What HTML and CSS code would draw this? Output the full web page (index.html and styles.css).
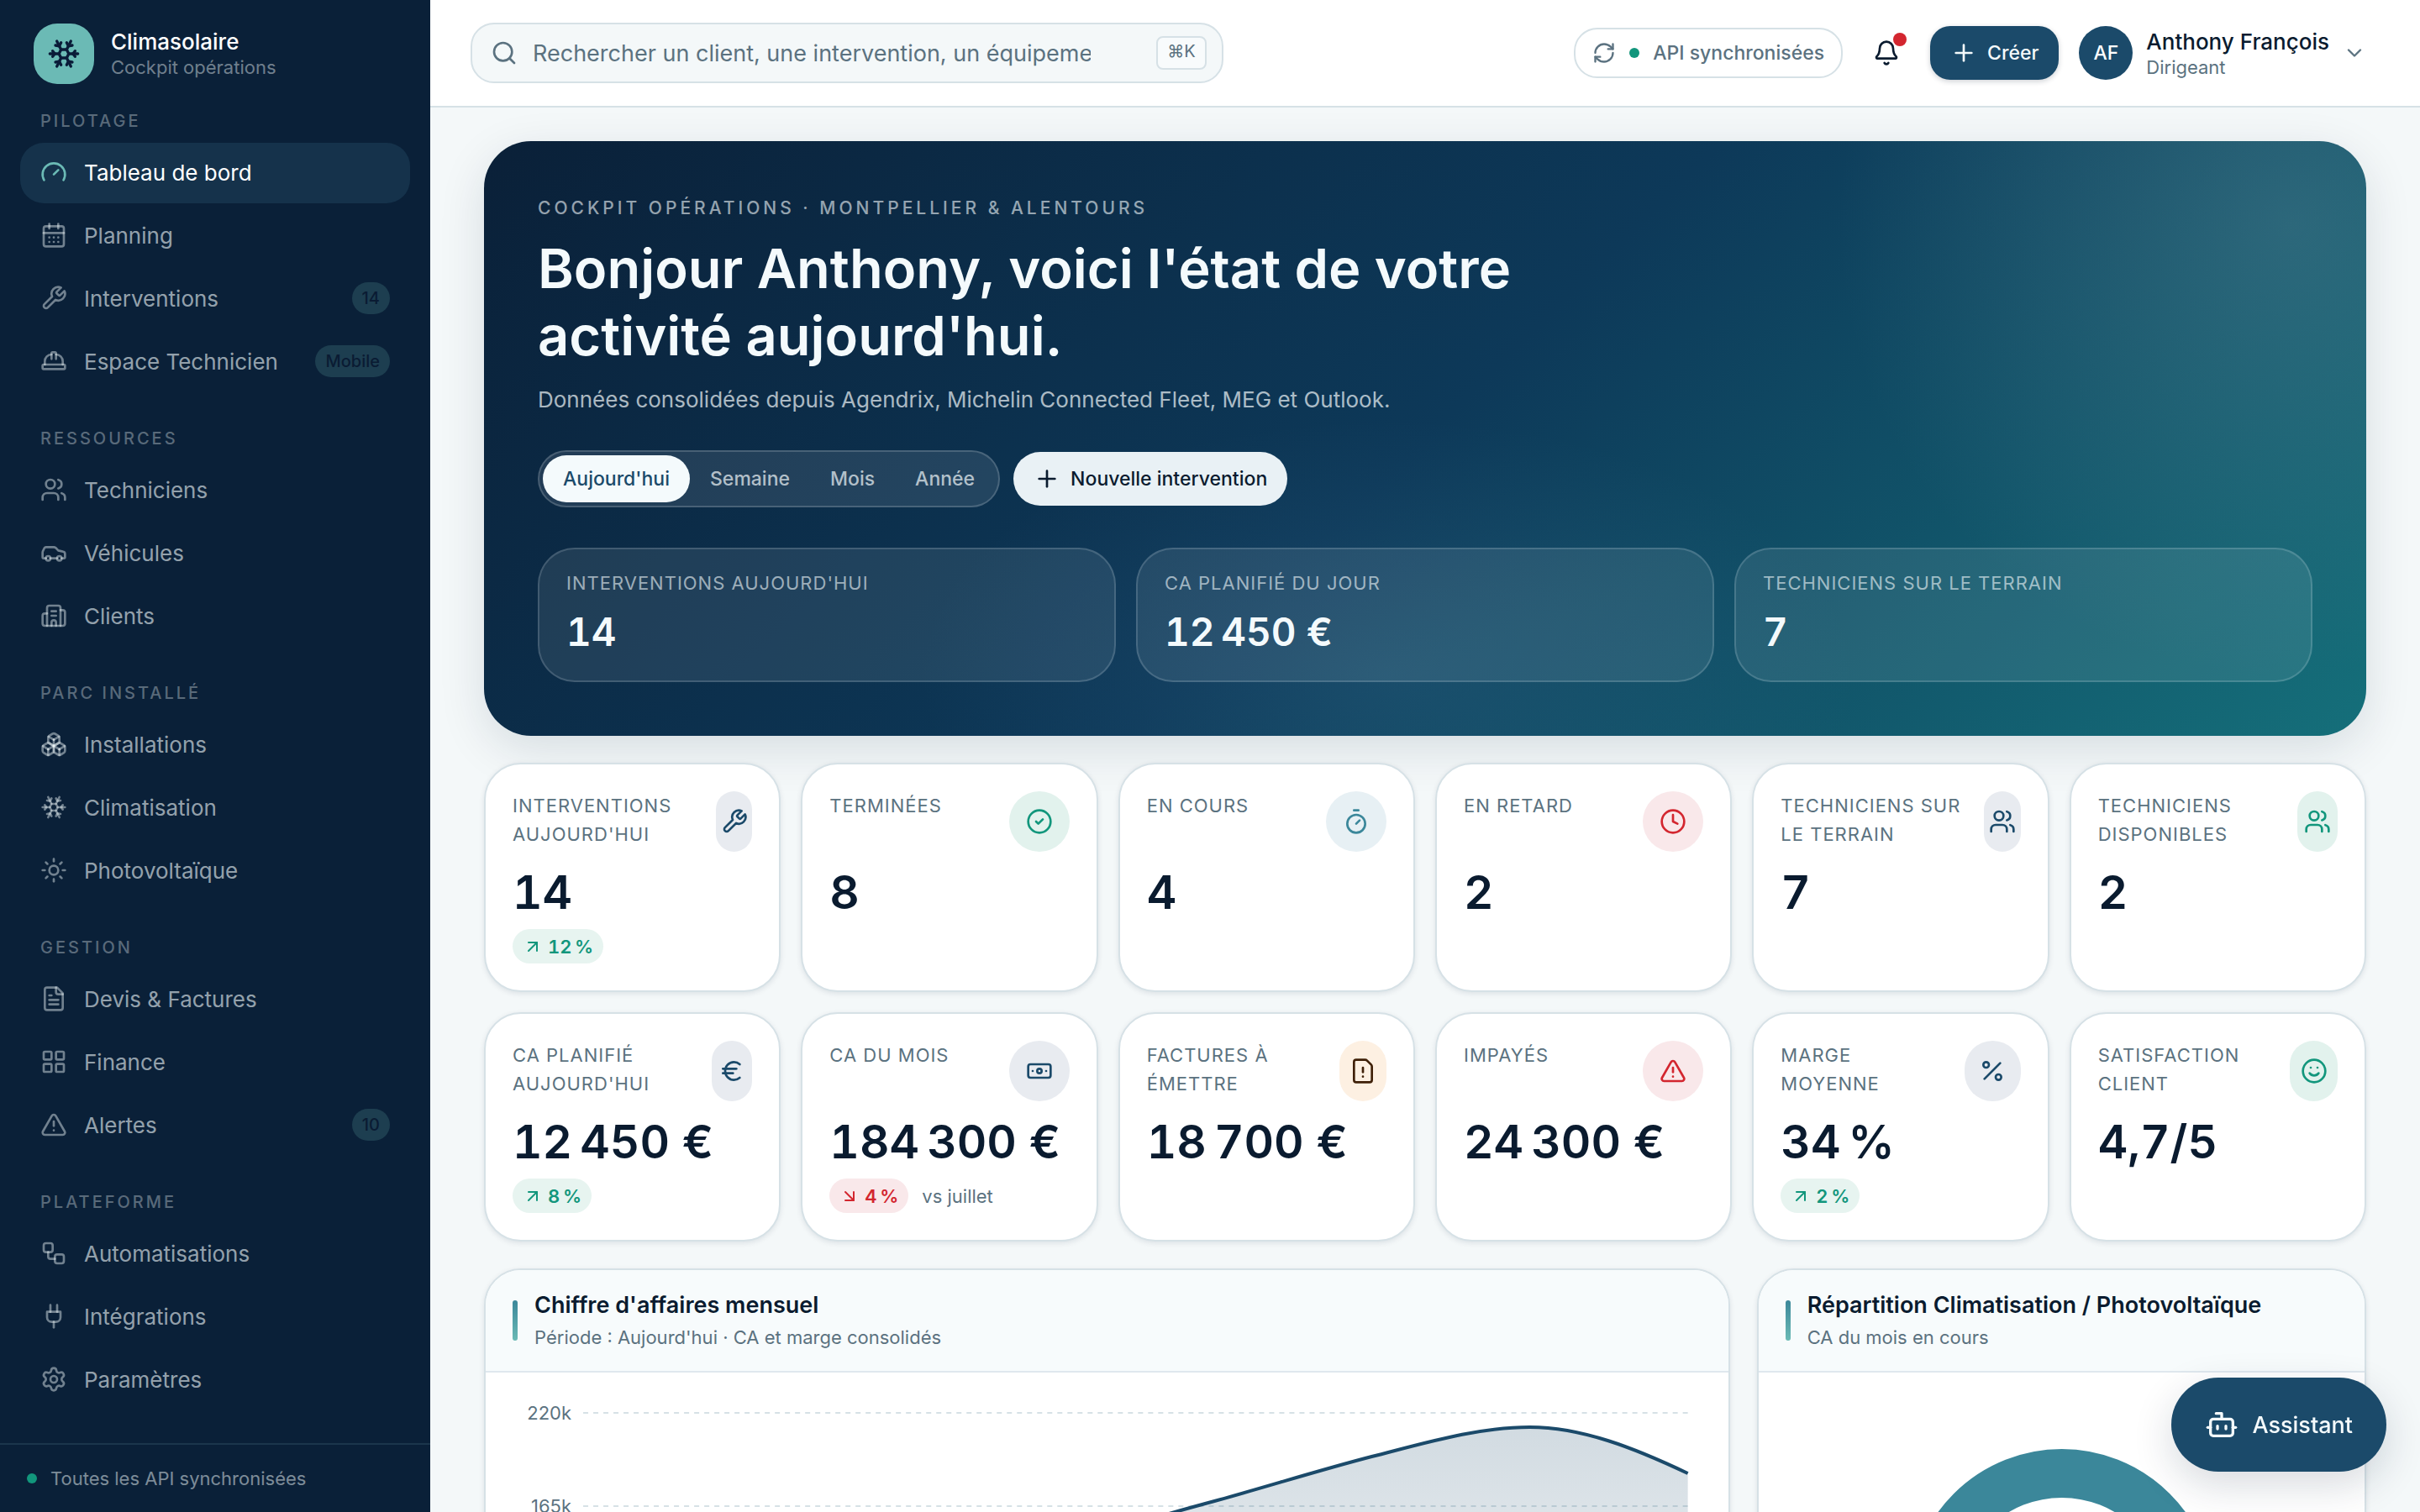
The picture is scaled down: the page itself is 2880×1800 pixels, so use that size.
FILE: index.html
```html
<!DOCTYPE html>
<html lang="fr">
<head>
    <meta charset="UTF-8">
    <meta name="viewport" content="width=device-width, initial-scale=1.0">
    <title>Climasolaire - Cockpit opérations</title>
    <link rel="stylesheet" href="styles.css">
</head>
<body>
    <!-- Icon sprite -->
    <svg class="sprite" aria-hidden="true">
        <symbol id="i-gauge" viewBox="0 0 24 24"><path d="m12 14 4-4"/><path d="M3.34 19a10 10 0 1 1 17.32 0"/></symbol>
        <symbol id="i-calendar" viewBox="0 0 24 24"><path d="M8 2v4"/><path d="M16 2v4"/><rect width="18" height="18" x="3" y="4" rx="2"/><path d="M3 10h18"/><path d="M8 14h.01"/><path d="M12 14h.01"/><path d="M16 14h.01"/><path d="M8 18h.01"/><path d="M12 18h.01"/><path d="M16 18h.01"/></symbol>
        <symbol id="i-wrench" viewBox="0 0 24 24"><path d="M14.7 6.3a1 1 0 0 0 0 1.4l1.6 1.6a1 1 0 0 0 1.4 0l3.77-3.77a6 6 0 0 1-7.94 7.94l-6.91 6.91a2.12 2.12 0 0 1-3-3l6.91-6.91a6 6 0 0 1 7.94-7.94l-3.76 3.76z"/></symbol>
        <symbol id="i-hardhat" viewBox="0 0 24 24"><path d="M10 10V5a1 1 0 0 1 1-1h2a1 1 0 0 1 1 1v5"/><path d="M14 6a6 6 0 0 1 6 6v3"/><path d="M4 15v-3a6 6 0 0 1 6-6"/><rect x="2" y="15" width="20" height="4" rx="1"/></symbol>
        <symbol id="i-users" viewBox="0 0 24 24"><path d="M16 21v-2a4 4 0 0 0-4-4H6a4 4 0 0 0-4 4v2"/><path d="M16 3.128a4 4 0 0 1 0 7.744"/><path d="M22 21v-2a4 4 0 0 0-3-3.87"/><circle cx="9" cy="7" r="4"/></symbol>
        <symbol id="i-car" viewBox="0 0 24 24"><path d="M19 17h2c.6 0 1-.4 1-1v-3c0-.9-.7-1.7-1.5-1.9C18.7 10.6 16 10 16 10s-1.3-1.4-2.2-2.3c-.5-.4-1.1-.7-1.8-.7H5c-.6 0-1.1.4-1.4.9l-1.4 2.9A3.7 3.7 0 0 0 2 12v4c0 .6.4 1 1 1h2"/><circle cx="7" cy="17" r="2"/><path d="M9 17h6"/><circle cx="17" cy="17" r="2"/></symbol>
        <symbol id="i-building" viewBox="0 0 24 24"><path d="M10 12h4"/><path d="M10 8h4"/><path d="M14 21v-3a2 2 0 0 0-4 0v3"/><path d="M6 10H4a2 2 0 0 0-2 2v7a2 2 0 0 0 2 2h16a2 2 0 0 0 2-2V9a2 2 0 0 0-2-2h-2"/><path d="M6 21V5a2 2 0 0 1 2-2h8a2 2 0 0 1 2 2v16"/></symbol>
        <symbol id="i-boxes" viewBox="0 0 24 24"><path d="M2.97 12.92A2 2 0 0 0 2 14.63v3.24a2 2 0 0 0 .97 1.71l3 1.8a2 2 0 0 0 2.06 0L12 19v-5.5l-5-3-4.03 2.42Z"/><path d="m7 16.5-4.74-2.85"/><path d="m7 16.5 5-3"/><path d="M7 16.5v5.17"/><path d="M12 13.5V19l3.97 2.38a2 2 0 0 0 2.06 0l3-1.8a2 2 0 0 0 .97-1.71v-3.24a2 2 0 0 0-.97-1.71L17 10.5l-5 3Z"/><path d="m17 16.5-5-3"/><path d="m17 16.5 4.74-2.85"/><path d="M17 16.5v5.17"/><path d="M7.97 4.42A2 2 0 0 0 7 6.13v4.37l5 3 5-3V6.13a2 2 0 0 0-.97-1.71l-3-1.8a2 2 0 0 0-2.06 0l-3 1.8Z"/><path d="M12 8 7.26 5.15"/><path d="m12 8 4.74-2.85"/><path d="M12 13.5V8"/></symbol>
        <symbol id="i-snow" viewBox="0 0 24 24"><path d="m10 20-1.25-2.5L6 18"/><path d="M10 4 8.75 6.5 6 6"/><path d="m14 20 1.25-2.5L18 18"/><path d="m14 4 1.25 2.5L18 6"/><path d="m17 21-3-6h-4"/><path d="m17 3-3 6 1.5 3"/><path d="M2 12h6.5L10 9"/><path d="m20 10-1.5 2 1.5 2"/><path d="M22 12h-6.5L14 15"/><path d="m4 10 1.5 2L4 14"/><path d="m7 21 3-6-1.5-3"/><path d="m7 3 3 6h4"/></symbol>
        <symbol id="i-sun" viewBox="0 0 24 24"><circle cx="12" cy="12" r="4"/><path d="M12 2v2"/><path d="M12 20v2"/><path d="m4.93 4.93 1.41 1.41"/><path d="m17.66 17.66 1.41 1.41"/><path d="M2 12h2"/><path d="M20 12h2"/><path d="m6.34 17.66-1.41 1.41"/><path d="m19.07 4.93-1.41 1.41"/></symbol>
        <symbol id="i-file" viewBox="0 0 24 24"><path d="M15 2H6a2 2 0 0 0-2 2v16a2 2 0 0 0 2 2h12a2 2 0 0 0 2-2V7Z"/><path d="M14 2v4a2 2 0 0 0 2 2h4"/><path d="M10 9H8"/><path d="M16 13H8"/><path d="M16 17H8"/></symbol>
        <symbol id="i-grid" viewBox="0 0 24 24"><rect width="7" height="7" x="3" y="3" rx="1"/><rect width="7" height="7" x="14" y="3" rx="1"/><rect width="7" height="7" x="14" y="14" rx="1"/><rect width="7" height="7" x="3" y="14" rx="1"/></symbol>
        <symbol id="i-alert" viewBox="0 0 24 24"><path d="m21.73 18-8-14a2 2 0 0 0-3.48 0l-8 14A2 2 0 0 0 4 21h16a2 2 0 0 0 1.73-3"/><path d="M12 9v4"/><path d="M12 17h.01"/></symbol>
        <symbol id="i-workflow" viewBox="0 0 24 24"><rect width="8" height="8" x="3" y="3" rx="2"/><path d="M7 11v4a2 2 0 0 0 2 2h4"/><rect width="8" height="8" x="13" y="13" rx="2"/></symbol>
        <symbol id="i-plug" viewBox="0 0 24 24"><path d="M12 22v-5"/><path d="M9 8V2"/><path d="M15 8V2"/><path d="M18 8v5a4 4 0 0 1-4 4h-4a4 4 0 0 1-4-4V8Z"/></symbol>
        <symbol id="i-settings" viewBox="0 0 24 24"><path d="M9.671 4.136a2.34 2.34 0 0 1 4.659 0 2.34 2.34 0 0 0 3.319 1.915 2.34 2.34 0 0 1 2.33 4.033 2.34 2.34 0 0 0 0 3.831 2.34 2.34 0 0 1-2.33 4.033 2.34 2.34 0 0 0-3.319 1.915 2.34 2.34 0 0 1-4.659 0 2.34 2.34 0 0 0-3.32-1.915 2.34 2.34 0 0 1-2.33-4.033 2.34 2.34 0 0 0 0-3.831A2.34 2.34 0 0 1 6.35 6.051a2.34 2.34 0 0 0 3.319-1.915"/><circle cx="12" cy="12" r="3"/></symbol>
        <symbol id="i-search" viewBox="0 0 24 24"><path d="m21 21-4.34-4.34"/><circle cx="11" cy="11" r="8"/></symbol>
        <symbol id="i-refresh" viewBox="0 0 24 24"><path d="M3 12a9 9 0 0 1 9-9 9.75 9.75 0 0 1 6.74 2.74L21 8"/><path d="M21 3v5h-5"/><path d="M21 12a9 9 0 0 1-9 9 9.75 9.75 0 0 1-6.74-2.74L3 16"/><path d="M8 16H3v5"/></symbol>
        <symbol id="i-bell" viewBox="0 0 24 24"><path d="M10.268 21a2 2 0 0 0 3.464 0"/><path d="M3.262 15.326A1 1 0 0 0 4 17h16a1 1 0 0 0 .74-1.673C19.41 13.956 18 12.499 18 8A6 6 0 0 0 6 8c0 4.499-1.411 5.956-2.738 7.326"/></symbol>
        <symbol id="i-plus" viewBox="0 0 24 24"><path d="M5 12h14"/><path d="M12 5v14"/></symbol>
        <symbol id="i-chevron" viewBox="0 0 24 24"><path d="m6 9 6 6 6-6"/></symbol>
        <symbol id="i-check" viewBox="0 0 24 24"><circle cx="12" cy="12" r="10"/><path d="m9 12 2 2 4-4"/></symbol>
        <symbol id="i-timer" viewBox="0 0 24 24"><path d="M10 2h4"/><path d="m12 14 3-3"/><circle cx="12" cy="14" r="8"/></symbol>
        <symbol id="i-clock" viewBox="0 0 24 24"><circle cx="12" cy="12" r="10"/><path d="M12 6v6l4 2"/></symbol>
        <symbol id="i-euro" viewBox="0 0 24 24"><path d="M4 10h12"/><path d="M4 14h9"/><path d="M19 6a7.7 7.7 0 0 0-5.2-2A7.9 7.9 0 0 0 6 12c0 4.4 3.5 8 7.8 8 2 0 3.8-.8 5.2-2"/></symbol>
        <symbol id="i-banknote" viewBox="0 0 24 24"><rect width="20" height="12" x="2" y="6" rx="2"/><circle cx="12" cy="12" r="2"/><path d="M6 12h.01M18 12h.01"/></symbol>
        <symbol id="i-filewarn" viewBox="0 0 24 24"><path d="M6 22a2 2 0 0 1-2-2V4a2 2 0 0 1 2-2h8a2.4 2.4 0 0 1 1.7.7l3.6 3.6A2.4 2.4 0 0 1 20 8v12a2 2 0 0 1-2 2z"/><path d="M12 9v4"/><path d="M12 17h.01"/></symbol>
        <symbol id="i-percent" viewBox="0 0 24 24"><path d="M19 5 5 19"/><circle cx="6.5" cy="6.5" r="2.5"/><circle cx="17.5" cy="17.5" r="2.5"/></symbol>
        <symbol id="i-smile" viewBox="0 0 24 24"><circle cx="12" cy="12" r="10"/><path d="M8 14s1.500 2 4 2 4-2 4-2"/><path d="M9 9h.01"/><path d="M15 9h.01"/></symbol>
        <symbol id="i-up" viewBox="0 0 24 24"><path d="M7 7h10v10"/><path d="M7 17 17 7"/></symbol>
        <symbol id="i-down" viewBox="0 0 24 24"><path d="m7 7 10 10"/><path d="M17 7v10H7"/></symbol>
        <symbol id="i-bot" viewBox="0 0 24 24"><path d="M12 8V4H8"/><rect width="16" height="12" x="4" y="8" rx="2"/><path d="M2 14h2"/><path d="M20 14h2"/><path d="M15 13v2"/><path d="M9 13v2"/></symbol>
    </svg>

    <div class="app">
        <aside class="sidebar">
            <div class="brand">
                <span class="brand-logo"><svg class="icon icon-lg"><use href="#i-snow"/></svg></span>
                <div>
                    <div class="brand-name">Climasolaire</div>
                    <div class="brand-sub">Cockpit opérations</div>
                </div>
            </div>

            <nav class="nav">
                <section class="nav-section">
                    <h2>Pilotage</h2>
                    <a href="#" class="active"><svg class="icon"><use href="#i-gauge"/></svg>Tableau de bord</a>
                    <a href="#"><svg class="icon"><use href="#i-calendar"/></svg>Planning</a>
                    <a href="#"><svg class="icon"><use href="#i-wrench"/></svg>Interventions<span class="nav-badge">14</span></a>
                    <a href="#"><svg class="icon"><use href="#i-hardhat"/></svg>Espace Technicien<span class="nav-badge">Mobile</span></a>
                </section>
                <section class="nav-section">
                    <h2>Ressources</h2>
                    <a href="#"><svg class="icon"><use href="#i-users"/></svg>Techniciens</a>
                    <a href="#"><svg class="icon"><use href="#i-car"/></svg>Véhicules</a>
                    <a href="#"><svg class="icon"><use href="#i-building"/></svg>Clients</a>
                </section>
                <section class="nav-section">
                    <h2>Parc installé</h2>
                    <a href="#"><svg class="icon"><use href="#i-boxes"/></svg>Installations</a>
                    <a href="#"><svg class="icon"><use href="#i-snow"/></svg>Climatisation</a>
                    <a href="#"><svg class="icon"><use href="#i-sun"/></svg>Photovoltaïque</a>
                </section>
                <section class="nav-section">
                    <h2>Gestion</h2>
                    <a href="#"><svg class="icon"><use href="#i-file"/></svg>Devis &amp; Factures</a>
                    <a href="#"><svg class="icon"><use href="#i-grid"/></svg>Finance</a>
                    <a href="#"><svg class="icon"><use href="#i-alert"/></svg>Alertes<span class="nav-badge">10</span></a>
                </section>
                <section class="nav-section">
                    <h2>Plateforme</h2>
                    <a href="#"><svg class="icon"><use href="#i-workflow"/></svg>Automatisations</a>
                    <a href="#"><svg class="icon"><use href="#i-plug"/></svg>Intégrations</a>
                    <a href="#"><svg class="icon"><use href="#i-settings"/></svg>Paramètres</a>
                </section>
            </nav>

            <div class="sidebar-footer"><span class="dot"></span>Toutes les API synchronisées</div>
        </aside>

        <div class="page">
            <header class="topbar">
                <label class="search">
                    <svg class="icon"><use href="#i-search"/></svg>
                    <input type="text" aria-label="Recherche" placeholder="Rechercher un client, une intervention, un équipement…">
                    <kbd>⌘K</kbd>
                </label>
                <div class="topbar-actions">
                    <button class="sync"><svg class="icon icon-sm"><use href="#i-refresh"/></svg><span class="dot"></span>API synchronisées</button>
                    <button class="bell" aria-label="Notifications"><svg class="icon"><use href="#i-bell"/></svg><span class="bell-dot"></span></button>
                    <button class="btn-create"><svg class="icon"><use href="#i-plus"/></svg>Créer</button>
                    <button class="user">
                        <span class="avatar">AF</span>
                        <span class="user-text">
                            <span class="user-name">Anthony François</span>
                            <span class="user-role">Dirigeant</span>
                        </span>
                        <svg class="icon icon-sm"><use href="#i-chevron"/></svg>
                    </button>
                </div>
            </header>

            <main class="content">
                <section class="hero">
                    <p class="hero-eyebrow">Cockpit opérations · Montpellier &amp; alentours</p>
                    <h1>Bonjour Anthony, voici l'état de votre activité aujourd'hui.</h1>
                    <p class="hero-sub">Données consolidées depuis Agendrix, Michelin Connected Fleet, MEG et Outlook.</p>
                    <div class="hero-actions">
                        <div class="period">
                            <button class="selected">Aujourd'hui</button>
                            <button>Semaine</button>
                            <button>Mois</button>
                            <button>Année</button>
                        </div>
                        <button class="btn-new"><svg class="icon"><use href="#i-plus"/></svg>Nouvelle intervention</button>
                    </div>
                    <div class="hero-stats">
                        <div class="hero-stat"><h3>Interventions aujourd'hui</h3><strong>14</strong></div>
                        <div class="hero-stat"><h3>CA planifié du jour</h3><strong>12&#8239;450&nbsp;€</strong></div>
                        <div class="hero-stat"><h3>Techniciens sur le terrain</h3><strong>7</strong></div>
                    </div>
                </section>

                <section class="kpis">
                    <article class="kpi">
                        <div class="kpi-head"><h3>Interventions aujourd'hui</h3><span class="chip navy"><svg class="icon"><use href="#i-wrench"/></svg></span></div>
                        <strong>14</strong>
                        <div class="trend"><span class="pill up"><svg class="icon"><use href="#i-up"/></svg>12&#8239;%</span></div>
                    </article>
                    <article class="kpi">
                        <div class="kpi-head"><h3>Terminées</h3><span class="chip green"><svg class="icon"><use href="#i-check"/></svg></span></div>
                        <strong>8</strong>
                    </article>
                    <article class="kpi">
                        <div class="kpi-head"><h3>En cours</h3><span class="chip teal"><svg class="icon"><use href="#i-timer"/></svg></span></div>
                        <strong>4</strong>
                    </article>
                    <article class="kpi">
                        <div class="kpi-head"><h3>En retard</h3><span class="chip red"><svg class="icon"><use href="#i-clock"/></svg></span></div>
                        <strong>2</strong>
                    </article>
                    <article class="kpi">
                        <div class="kpi-head"><h3>Techniciens sur le terrain</h3><span class="chip navy"><svg class="icon"><use href="#i-users"/></svg></span></div>
                        <strong>7</strong>
                    </article>
                    <article class="kpi">
                        <div class="kpi-head"><h3>Techniciens disponibles</h3><span class="chip green"><svg class="icon"><use href="#i-users"/></svg></span></div>
                        <strong>2</strong>
                    </article>
                    <article class="kpi">
                        <div class="kpi-head"><h3>CA planifié aujourd'hui</h3><span class="chip navy"><svg class="icon"><use href="#i-euro"/></svg></span></div>
                        <strong>12&#8239;450&nbsp;€</strong>
                        <div class="trend"><span class="pill up"><svg class="icon"><use href="#i-up"/></svg>8&#8239;%</span></div>
                    </article>
                    <article class="kpi">
                        <div class="kpi-head"><h3>CA du mois</h3><span class="chip navy"><svg class="icon"><use href="#i-banknote"/></svg></span></div>
                        <strong>184&#8239;300&nbsp;€</strong>
                        <div class="trend"><span class="pill down"><svg class="icon"><use href="#i-down"/></svg>4&#8239;%</span>vs juillet</div>
                    </article>
                    <article class="kpi">
                        <div class="kpi-head"><h3>Factures à émettre</h3><span class="chip orange"><svg class="icon"><use href="#i-filewarn"/></svg></span></div>
                        <strong>18&#8239;700&nbsp;€</strong>
                    </article>
                    <article class="kpi">
                        <div class="kpi-head"><h3>Impayés</h3><span class="chip red"><svg class="icon"><use href="#i-alert"/></svg></span></div>
                        <strong>24&#8239;300&nbsp;€</strong>
                    </article>
                    <article class="kpi">
                        <div class="kpi-head"><h3>Marge moyenne</h3><span class="chip navy"><svg class="icon"><use href="#i-percent"/></svg></span></div>
                        <strong>34&#8239;%</strong>
                        <div class="trend"><span class="pill up"><svg class="icon"><use href="#i-up"/></svg>2&#8239;%</span></div>
                    </article>
                    <article class="kpi">
                        <div class="kpi-head"><h3>Satisfaction client</h3><span class="chip green"><svg class="icon"><use href="#i-smile"/></svg></span></div>
                        <strong>4,7/5</strong>
                    </article>
                </section>

                <section class="panels">
                    <article class="panel panel-wide">
                        <header class="panel-head">
                            <div>
                                <h2>Chiffre d'affaires mensuel</h2>
                                <p>Période : Aujourd'hui · CA et marge consolidés</p>
                            </div>
                        </header>
                        <div class="panel-body">
                            <svg class="chart" viewBox="0 0 1414 520">
                                <defs>
                                    <linearGradient id="area" x1="0" y1="0" x2="0" y2="1">
                                        <stop offset="0" stop-color="#1b4a6a" stop-opacity="0.2"/>
                                        <stop offset="1" stop-color="#1b4a6a" stop-opacity="0"/>
                                    </linearGradient>
                                </defs>
                                <g class="chart-grid">
                                    <path d="M84 16H1398M84 127H1398M84 238H1398M84 349H1398M84 460H1398"/>
                                </g>
                                <g class="chart-axis">
                                    <text x="70" y="24">220k</text>
                                    <text x="70" y="135">165k</text>
                                </g>
                                <path fill="url(#area)" d="M84 250C147 240 209 236 272 228C334 220 397 210 459 196C522 182 584 192 647 174C710 156 772 138 835 121C897 104 960 84 1022 68C1085 52 1147 33 1210 33C1272 33 1335 58 1398 88V460H84Z"/>
                                <path class="chart-line" d="M84 250C147 240 209 236 272 228C334 220 397 210 459 196C522 182 584 192 647 174C710 156 772 138 835 121C897 104 960 84 1022 68C1085 52 1147 33 1210 33C1272 33 1335 58 1398 88"/>
                            </svg>
                        </div>
                    </article>
                    <article class="panel">
                        <header class="panel-head">
                            <div>
                                <h2>Répartition Climatisation / Photovoltaïque</h2>
                                <p>CA du mois en cours</p>
                            </div>
                        </header>
                        <div class="panel-body">
                            <svg class="chart" viewBox="0 0 658 520">
                                <circle cx="329" cy="241" r="153" fill="none" stroke="#3b879a" stroke-width="58"/>
                                <path d="M476 284A153 153 0 0 1 182 284" fill="none" stroke="#6dbcb6" stroke-width="58"/>
                            </svg>
                        </div>
                    </article>
                </section>
            </main>
        </div>

        <button class="assistant"><svg class="icon icon-lg"><use href="#i-bot"/></svg>Assistant</button>
    </div>
</body>
</html>
```
FILE: styles.css
```css
* {
    box-sizing: border-box;
}

body {
    margin: 0;
    font-family: Inter, "Noto Sans", sans-serif;
    font-size: 28px;
    color: #0a1b2f;
    background-color: #f4f8f9;
}

h1, h2, h3, p {
    margin: 0;
}

button {
    border: none;
    background: none;
    padding: 0;
    font: inherit;
    color: inherit;
    cursor: pointer;
}

.sprite {
    display: none;
}

.icon {
    width: 32px;
    height: 32px;
    flex-shrink: 0;
    fill: none;
    stroke: currentColor;
    stroke-width: 2;
    stroke-linecap: round;
    stroke-linejoin: round;
}

.icon-sm {
    width: 28px;
    height: 28px;
}

.icon-lg {
    width: 40px;
    height: 40px;
}

.dot {
    width: 12px;
    height: 12px;
    flex-shrink: 0;
    border-radius: 50%;
    background-color: #12967c;
}

.app {
    display: flex;
    height: 100vh;
    overflow: hidden;
}

/* Sidebar */
.sidebar {
    display: flex;
    flex-direction: column;
    width: 512px;
    flex-shrink: 0;
    background-color: #0a2038;
    color: #fff;
}

.brand {
    display: flex;
    align-items: center;
    gap: 20px;
    padding: 28px 40px;
}

.brand-logo {
    display: flex;
    align-items: center;
    justify-content: center;
    width: 72px;
    height: 72px;
    border-radius: 28px;
    background-color: #6bbab5;
    color: #0a1b38;
}

.brand-name {
    font-size: 26px;
    font-weight: 500;
    line-height: 32px;
}

.brand-sub {
    font-size: 22px;
    line-height: 28px;
    color: rgba(240, 248, 250, 0.45);
}

.nav {
    flex: 1;
    padding: 0 24px;
    overflow: hidden;
}

.nav-section {
    display: flex;
    flex-direction: column;
    gap: 3px;
    margin-bottom: 39px;
}

.nav-section h2 {
    margin-bottom: 7px;
    padding: 0 24px;
    font-size: 20px;
    font-weight: 500;
    line-height: 32px;
    letter-spacing: 3px;
    text-transform: uppercase;
    color: rgba(240, 248, 250, 0.35);
}

.nav-section a {
    display: flex;
    align-items: center;
    gap: 20px;
    height: 72px;
    padding: 0 24px 2px;
    border-radius: 28px;
    font-size: 26px;
    font-weight: 400;
    color: rgba(240, 248, 250, 0.62);
    text-decoration: none;
}

.nav-section .icon {
    color: rgba(240, 248, 250, 0.45);
}

.nav-section .active {
    background-color: #15324b;
    color: #fff;
}

.nav-section .active .icon {
    color: #6bbab5;
}

.nav-badge {
    margin-left: auto;
    padding: 0 12px;
    border-radius: 19px;
    background-color: #1d3e50;
    color: #0a1b33;
    font-size: 20px;
    font-weight: 500;
    line-height: 38px;
}

.sidebar-footer {
    display: flex;
    align-items: center;
    gap: 16px;
    height: 82px;
    padding: 0 32px;
    border-top: 2px solid #1b364c;
    font-size: 22px;
    color: rgba(240, 248, 250, 0.5);
}

/* Top bar */
.page {
    display: flex;
    flex: 1;
    flex-direction: column;
    min-width: 0;
}

.topbar {
    display: flex;
    align-items: center;
    justify-content: space-between;
    flex-shrink: 0;
    height: 128px;
    padding: 0 48px;
    background-color: #fff;
    border-bottom: 2px solid #d6e1e6;
}

.search {
    display: flex;
    align-items: center;
    gap: 18px;
    width: 896px;
    height: 72px;
    padding: 0 18px 0 22px;
    border: 2px solid #d6e1e6;
    border-radius: 28px;
    background-color: #f4f8f9;
    color: #5b7280;
}

.search input {
    flex: 1;
    min-width: 0;
    margin-right: 60px;
    padding: 0;
    border: none;
    outline: none;
    background: none;
    font: inherit;
    font-size: 27px;
    color: #0a1b2f;
}

.search input::placeholder {
    color: #5b7280;
}

.search kbd {
    width: 60px;
    height: 40px;
    border: 2px solid #d6e1e6;
    border-radius: 8px;
    background-color: #f8fbfc;
    font-family: inherit;
    font-size: 20px;
    line-height: 32px;
    text-align: center;
}

.topbar-actions {
    display: flex;
    align-items: center;
    gap: 20px;
    font-size: 23px;
    font-weight: 500;
}

.sync {
    display: flex;
    align-items: center;
    gap: 16px;
    height: 60px;
    padding: 0 20px;
    border: 2px solid #d6e1e6;
    border-radius: 28px;
    color: #5b7280;
}

.bell {
    position: relative;
    display: flex;
    align-items: center;
    justify-content: center;
    width: 64px;
    height: 64px;
}

.bell-dot {
    position: absolute;
    top: 8px;
    right: 8px;
    width: 16px;
    height: 16px;
    border-radius: 50%;
    background-color: #d3262f;
}

.btn-create {
    display: flex;
    align-items: center;
    gap: 12px;
    height: 64px;
    padding: 0 24px;
    border-radius: 24px;
    background-color: #1b4a6a;
    color: #f4fafc;
    box-shadow: 0 2px 6px rgba(10, 27, 47, 0.2);
}

.user {
    display: flex;
    align-items: center;
    gap: 16px;
    padding: 0 16px 0 4px;
}

.avatar {
    width: 64px;
    border-radius: 50%;
    background-color: #1b4a6a;
    color: #fff;
    line-height: 64px;
    text-align: center;
}

.user-text {
    display: flex;
    flex-direction: column;
    text-align: left;
}

.user-name {
    font-size: 26px;
    line-height: 34px;
}

.user-role {
    font-size: 22px;
    font-weight: 400;
    line-height: 26px;
    color: #5b7280;
}

.user .icon {
    color: #5b7280;
}

/* Content */
.content {
    display: flex;
    flex: 1;
    flex-direction: column;
    gap: 32px;
    min-height: 0;
    padding: 40px 64px;
    overflow: hidden;
}

.content > * {
    flex-shrink: 0;
}

.hero {
    padding: 64px;
    border-radius: 56px;
    background:
        radial-gradient(circle 540px at 96% 14%, rgba(115, 150, 165, 0.28), transparent),
        radial-gradient(ellipse at 48% 90%, rgba(90, 140, 180, 0.15), transparent 34%),
        linear-gradient(135deg, #0a2038 0%, #0d3959 50%, #156f7a 100%);
    color: #f4fafc;
    box-shadow: 0 16px 56px rgba(10, 32, 56, 0.12);
}

.hero-eyebrow {
    font-size: 21px;
    font-weight: 500;
    line-height: 32px;
    letter-spacing: 4px;
    text-transform: uppercase;
    color: rgba(244, 250, 252, 0.6);
}

.hero h1 {
    max-width: 1280px;
    margin: 16px 0;
    font-size: 65px;
    font-weight: 600;
    line-height: 80px;
}

.hero-sub {
    font-size: 26px;
    line-height: 40px;
    color: rgba(244, 250, 252, 0.7);
}

.hero-actions {
    display: flex;
    align-items: center;
    gap: 16px;
    margin: 40px 0 48px;
    font-size: 23px;
    font-weight: 500;
}

.period {
    display: flex;
    padding: 4px;
    border: 2px solid rgba(244, 250, 252, 0.18);
    border-radius: 34px;
    background-color: rgba(244, 250, 252, 0.1);
}

.period button {
    height: 56px;
    padding: 0 24px;
    border-radius: 28px;
    color: rgba(244, 250, 252, 0.7);
}

.period .selected {
    background-color: #f4fafc;
    color: #1b4a6a;
}

.btn-new {
    display: flex;
    align-items: center;
    gap: 12px;
    height: 64px;
    padding: 0 24px;
    border-radius: 32px;
    background-color: #e9f1f5;
    color: #0a1b2f;
}

.hero-stats {
    display: grid;
    grid-template-columns: repeat(3, 1fr);
    gap: 24px;
}

.hero-stat {
    height: 160px;
    padding: 24px 32px;
    border: 2px solid rgba(244, 250, 252, 0.16);
    border-radius: 44px;
    background-color: rgba(244, 250, 252, 0.09);
}

.hero-stat h3 {
    font-size: 22px;
    font-weight: 400;
    line-height: 32px;
    letter-spacing: 1px;
    text-transform: uppercase;
    color: rgba(244, 250, 252, 0.6);
}

.hero-stat strong {
    display: block;
    margin-top: 14px;
    font-size: 46px;
    font-weight: 600;
    line-height: 56px;
    font-variant-numeric: tabular-nums;
}

/* KPI cards */
.kpis {
    display: grid;
    grid-template-columns: repeat(6, minmax(0, 1fr));
    gap: 24px;
}

.kpi {
    min-height: 273px;
    padding: 32px;
    border: 2px solid #d6e1e6;
    border-radius: 44px;
    background-color: #fff;
    box-shadow: 0 2px 6px rgba(10, 32, 56, 0.1);
}

.kpi-head {
    display: flex;
    justify-content: space-between;
    gap: 24px;
    height: 72px;
}

.kpi h3 {
    font-size: 22px;
    font-weight: 400;
    line-height: 34px;
    letter-spacing: 1px;
    text-transform: uppercase;
    color: #5b7280;
}

.chip {
    display: flex;
    align-items: center;
    justify-content: center;
    width: 72px;
    height: 72px;
    border-radius: 36px;
}

.navy {
    background-color: #e8ebf0;
    color: #1b4a6a;
}

.green {
    background-color: #e2f2ed;
    color: #12967c;
}

.teal {
    background-color: #e7f0f4;
    color: #3b879a;
}

.red {
    background-color: #f9e8ea;
    color: #d3262f;
}

.orange {
    background-color: #fdf0e2;
    color: #3f2008;
}

.kpi strong {
    display: block;
    margin: 18px 0 14px;
    font-size: 55px;
    font-weight: 600;
    line-height: 60px;
    font-variant-numeric: tabular-nums;
    white-space: nowrap;
}

.trend {
    display: flex;
    align-items: center;
    gap: 16px;
    font-size: 22px;
    color: #5b7280;
}

.pill {
    display: flex;
    align-items: center;
    gap: 6px;
    height: 41px;
    padding: 0 12px;
    border-radius: 21px;
    font-weight: 600;
    font-variant-numeric: tabular-nums;
}

.pill .icon {
    width: 24px;
    height: 24px;
}

.up {
    background-color: #e7f4f0;
    color: #12967c;
}

.down {
    background-color: #f9e8ea;
    color: #d3262f;
}

/* Chart panels */
.panels {
    display: grid;
    grid-template-columns: repeat(12, minmax(0, 1fr));
    gap: 32px;
}

.panel {
    grid-column: span 4;
    border: 2px solid #d6e1e6;
    border-radius: 44px;
    background-color: #fff;
    box-shadow: 0 2px 6px rgba(10, 32, 56, 0.1);
    overflow: hidden;
}

.panel-wide {
    grid-column: span 8;
}

.panel-head {
    display: flex;
    align-items: center;
    gap: 20px;
    height: 122px;
    padding: 0 32px;
    border-bottom: 2px solid #dfe8ee;
    background-color: #f7fbfc;
}

.panel-head::before {
    content: "";
    width: 6px;
    height: 48px;
    border-radius: 3px;
    background: linear-gradient(#3b879a, #6bbab5);
}

.panel h2 {
    font-size: 27px;
    font-weight: 600;
    line-height: 40px;
}

.panel p {
    font-size: 22px;
    line-height: 36px;
    color: #5b7280;
}

.panel-body {
    padding: 32px;
}

.chart {
    display: block;
    width: 100%;
}

.chart-grid {
    stroke: #d6e1e6;
    stroke-width: 2;
    stroke-dasharray: 6 6;
}

.chart-axis {
    font-size: 22px;
    fill: #5b7280;
    text-anchor: end;
}

.chart-line {
    fill: none;
    stroke: #1b4a6a;
    stroke-width: 4;
}

/* Floating over the page */
.assistant {
    position: fixed;
    right: 40px;
    bottom: 48px;
    display: flex;
    align-items: center;
    gap: 16px;
    height: 112px;
    padding: 0 40px;
    border-radius: 56px;
    background-color: #1b4a6a;
    color: #f4fafc;
    font-size: 27px;
    font-weight: 500;
    box-shadow: 0 16px 48px rgba(10, 32, 56, 0.16);
}
```
